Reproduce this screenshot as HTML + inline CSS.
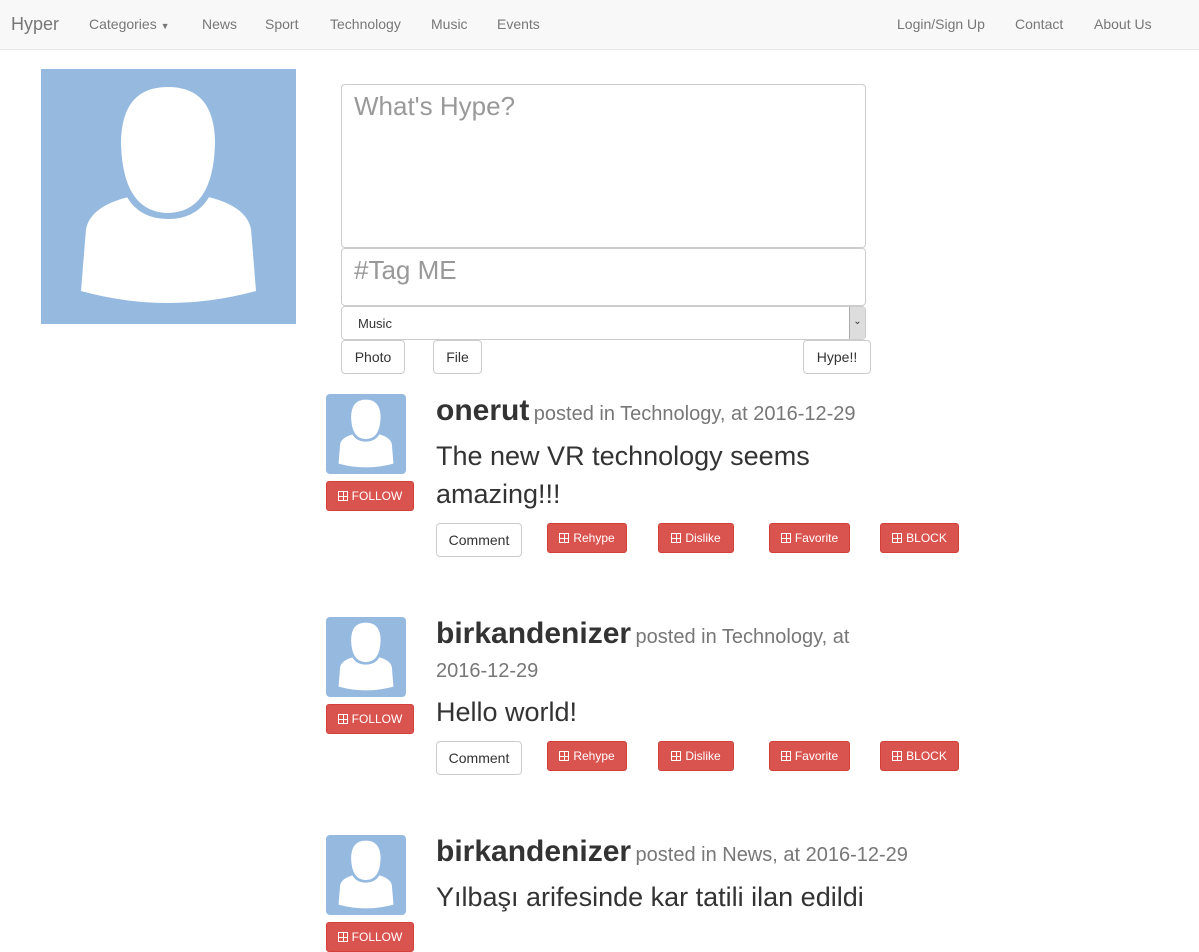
<!DOCTYPE html>
<html><head><meta charset="utf-8"><style>
*{box-sizing:border-box}
body{margin:0;width:1199px;height:945px;overflow:hidden;background:#fff;font-family:"Liberation Sans",Arial,Helvetica,sans-serif;color:#333;position:relative}
.nav{position:absolute;left:0;top:0;width:1199px;height:50px;background:#f8f8f8;border-bottom:1px solid #e7e7e7}
.nav span{position:absolute;top:16px;font-size:14px;color:#777}
.a{position:absolute}
.box{position:absolute;border:1px solid #ccc;border-radius:4px;background:#fff}
.btn{position:absolute;border:1px solid #ccc;border-radius:4px;background:#fff;font-size:14px;color:#333;text-align:center}
.red{position:absolute;background:#d9534f;border:1px solid #d43f3a;border-radius:3px;color:#fff;font-size:12px;text-align:center;line-height:28px;height:30px}
.ic{display:inline-block;width:10px;height:10px;border:1px solid #fff;margin-right:4px;vertical-align:-1px;background:linear-gradient(#fff,#fff) 4px 0/1px 10px no-repeat,linear-gradient(#fff,#fff) 0 4px/10px 1px no-repeat}
.name{font-size:30px;font-weight:bold;color:#333}
.meta{font-size:20px;color:#777}
.txt{position:absolute;font-size:27px;color:#333;line-height:38px}
</style></head><body>
<div class="nav">
<span style="left:11px;top:14px;font-size:18px">Hyper</span>
<span style="left:89px">Categories <span style="position:static;font-size:9px">▼</span></span>
<span style="left:202px">News</span><span style="left:265px">Sport</span><span style="left:330px">Technology</span><span style="left:431px">Music</span><span style="left:497px">Events</span>
<span style="left:897px">Login/Sign Up</span><span style="left:1015px">Contact</span><span style="left:1094px">About Us</span>
</div>
<svg class="a" style="left:41px;top:69px" width="255" height="255" viewBox="0 0 255 255">
<rect width="255" height="255" fill="#95b9df"/>
<path d="M40 222 L45 160 Q50 136 92 127 Q127 150 163 127 Q205 136 210 160 L215 222 Q127 246 40 222Z" fill="#fff"/>
<path d="M75 75 Q75 12 127 12 Q179 12 179 75 Q179 150 127 150 Q75 150 75 75Z" fill="#95b9df"/>
<path d="M80 75 Q80 18 127 18 Q174 18 174 75 Q172 143 127 144 Q82 143 80 75Z" fill="#fff"/>
</svg>
<div class="box" style="left:341px;top:84px;width:525px;height:164px"><span class="a" style="left:12px;top:6px;font-size:26px;color:#999">What's Hype?</span></div>
<div class="box" style="left:341px;top:248px;width:525px;height:58px"><span class="a" style="left:12px;top:6px;font-size:26px;color:#999">#Tag ME</span></div>
<div class="box" style="left:341px;top:306px;width:525px;height:34px"><span class="a" style="left:16px;top:9px;font-size:13px">Music</span><div class="a" style="right:0;top:0;width:16px;height:32px;background:#ddd;border-left:1px solid #aaa;font-size:10px;text-align:center;line-height:30px">⌄</div></div>
<div class="btn" style="left:341px;top:340px;width:64px;height:34px;line-height:32px">Photo</div>
<div class="btn" style="left:433px;top:340px;width:49px;height:34px;line-height:32px">File</div>
<div class="btn" style="left:803px;top:340px;width:68px;height:34px;line-height:32px">Hype!!</div>

<div id="p"></div>
<script>
const posts=[[394,'onerut','posted in Technology, at 2016-12-29',['The new VR technology seems','amazing!!!'],523,false],
[617,'birkandenizer','posted in Technology, at',['Hello world!'],741,true],
[835,'birkandenizer','posted in News, at 2016-12-29',['Yılbaşı arifesinde kar tatili ilan edildi'],null,false]];
let h='';
for(const [y,n,m,t,by,wrap] of posts){
h+=`<svg class="a" style="left:326px;top:${y}px;border-radius:4px" width="80" height="80" viewBox="0 0 255 255"><rect width="255" height="255" fill="#95b9df"/><path d="M40 222 L45 160 Q50 136 92 127 Q127 150 163 127 Q205 136 210 160 L215 222 Q127 246 40 222Z" fill="#fff"/><path d="M73 75 Q73 10 127 10 Q181 10 181 75 Q181 152 127 152 Q73 152 73 75Z" fill="#95b9df"/><path d="M80 75 Q80 18 127 18 Q174 18 174 75 Q172 143 127 144 Q82 143 80 75Z" fill="#fff"/></svg>`;
h+=`<div class="red" style="left:326px;top:${y+87}px;width:88px"><span class="ic"></span>FOLLOW</div>`;
h+=`<div class="a" style="left:436px;top:${y}px;white-space:nowrap"><span class="name">${n}</span> <span class="meta">${m}</span></div>`;
let ty=y+43;
if(wrap){h+=`<div class="a meta" style="left:436px;top:${y+43}px">2016-12-29</div>`;ty=y+76;}
h+=`<div class="txt" style="left:436px;top:${ty}px">${t.join('<br>')}</div>`;
if(by){h+=`<div class="btn" style="left:436px;top:${by}px;width:86px;height:34px;line-height:32px">Comment</div>`;
[['Rehype',547,80],['Dislike',658,76],['Favorite',769,81],['BLOCK',880,79]].forEach(([l,x,w])=>{h+=`<div class="red" style="left:${x}px;top:${by}px;width:${w}px"><span class="ic"></span>${l}</div>`});}
}
document.getElementById('p').innerHTML=h;
</script>
</body></html>
